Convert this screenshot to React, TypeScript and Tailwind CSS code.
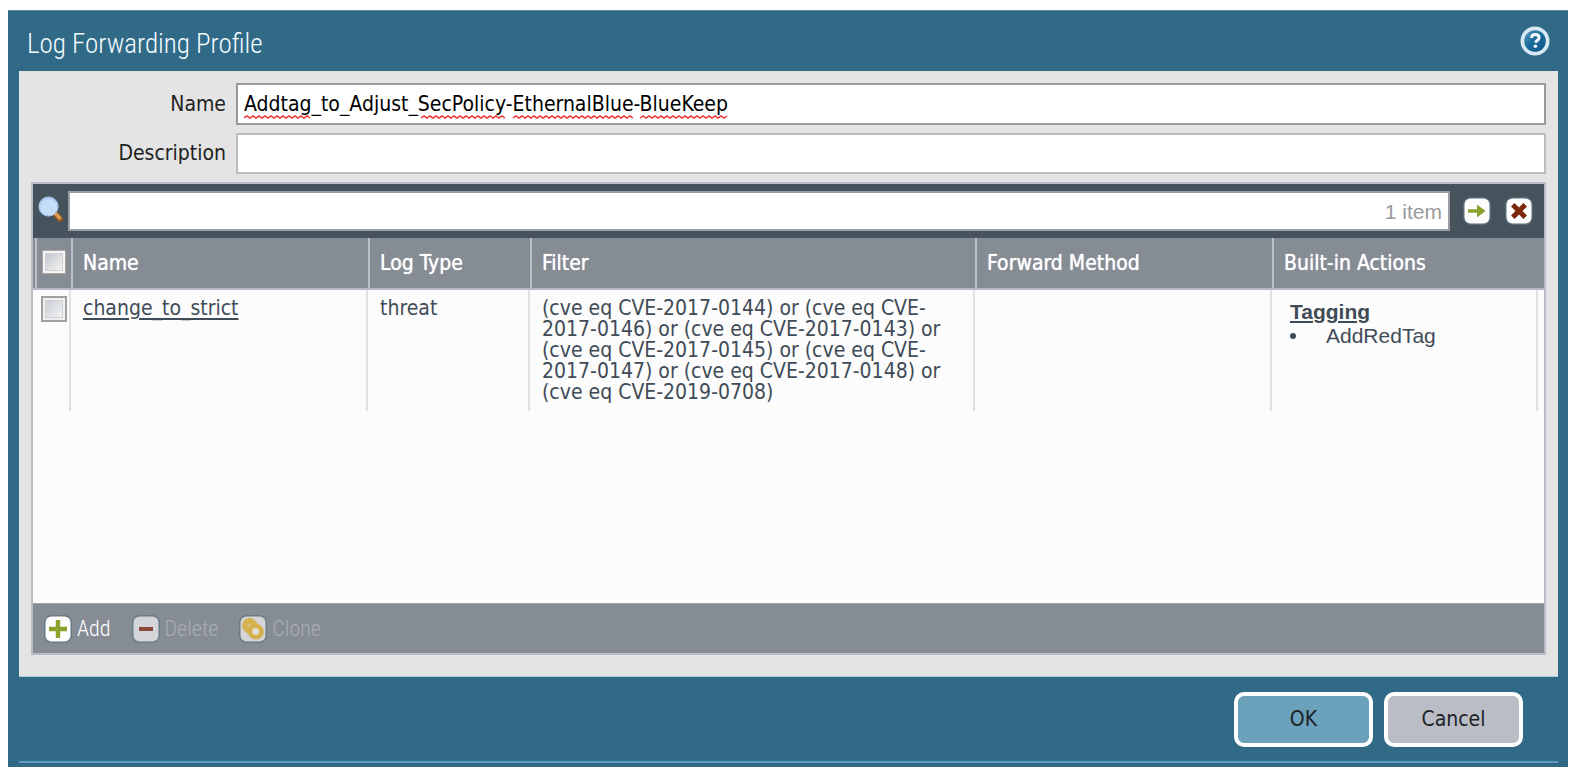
import { useState } from "react";
import type { ReactNode } from "react";

const misspelled = [
  { from: 0, to: 66 },
  { from: 177, to: 261 },
  { from: 269, to: 389 },
  { from: 396, to: 483 },
];

function wave(from: number, to: number) {
  let d = `M${from} 3`;
  let up = false;
  for (let x = from + 3; x <= to; x += 3) {
    d += ` L${x} ${up ? 3 : 1}`;
    up = !up;
  }
  return d;
}

function SpellMarks() {
  return (
    <svg
      aria-hidden="true"
      className="pointer-events-none absolute bottom-1.5 left-2"
      width="492"
      height="4"
      fill="none"
      stroke="#f03232"
      strokeWidth="1.5"
    >
      {misspelled.map((m) => (
        <path key={m.from} d={wave(m.from, m.to)} />
      ))}
    </svg>
  );
}

function HelpIcon() {
  return (
    <svg width="30" height="30" viewBox="0 0 30 30" aria-hidden="true">
      <defs>
        <linearGradient id="helpFill" x1="0" y1="0" x2="1" y2="1">
          <stop offset="0" stopColor="#5f9cc0" />
          <stop offset="0.45" stopColor="#1c6b9b" />
          <stop offset="1" stopColor="#0a5486" />
        </linearGradient>
      </defs>
      <circle cx="15" cy="15" r="14.5" fill="#d9e8f5" />
      <circle cx="15" cy="15" r="10.8" fill="url(#helpFill)" />
      <path
        d="M11.4 11.8c.2-2.2 1.8-3.4 3.9-3.4 2.2 0 3.8 1.2 3.8 3.1 0 2.6-3.2 2.7-3.5 5.2"
        fill="none"
        stroke="#f2f8fd"
        strokeWidth="3"
      />
      <circle cx="15.4" cy="20.2" r="1.8" fill="#f2f8fd" />
    </svg>
  );
}

function SearchIcon() {
  return (
    <svg width="26" height="27" viewBox="0 0 26 27" aria-hidden="true">
      <defs>
        <radialGradient id="lens" cx="0.5" cy="0.55" r="0.55">
          <stop offset="0" stopColor="#c3dcf5" />
          <stop offset="0.7" stopColor="#c6dff8" />
          <stop offset="1" stopColor="#9bbbe6" />
        </radialGradient>
      </defs>
      <path d="M18 17.5l5 5.5" stroke="#8a5520" strokeWidth="6" strokeLinecap="round" />
      <path d="M18 17l4.5 5" stroke="#d99a55" strokeWidth="3.6" strokeLinecap="round" />
      <circle cx="11.5" cy="10.5" r="9.6" fill="url(#lens)" stroke="#a9c6ec" strokeWidth="1" />
    </svg>
  );
}

function Tile({ faded, children }: { faded?: boolean; children: ReactNode }) {
  return (
    <svg width="30" height="30" viewBox="0 0 30 30" aria-hidden="true">
      <rect x="1" y="1" width="28" height="28" rx="8" fill="#5f7482" opacity="0.75" />
      <rect x="2.5" y="2.5" width="25" height="25" rx="6" fill={faded ? "#d3d5d8" : "#fdfefd"} />
      {children}
    </svg>
  );
}

function CheckBox({ label, outlined }: { label: string; outlined?: boolean }) {
  return (
    <input
      type="checkbox"
      aria-label={label}
      className={
        outlined
          ? "block size-[26px] shrink-0 appearance-none border-2 border-[#a0a0a0] bg-linear-to-br from-[#c0c8d0] to-[#fafafa] shadow-[inset_0_0_0_2px_#f0f0f0,inset_0_0_0_3px_#d0d0d0] checked:from-[#6ba1ba] checked:to-[#316a87]"
          : "block size-6 shrink-0 appearance-none border border-[#aaa5a2] bg-linear-to-br from-[#bcc1c6] to-[#fafafa] shadow-[inset_0_0_0_2px_#f4f4f4,inset_0_0_0_3px_#d0d0d0] checked:from-[#6ba1ba] checked:to-[#316a87]"
      }
    />
  );
}

function HeadCell({ children }: { children: ReactNode }) {
  return (
    <th
      scope="col"
      className="border-b-2 border-l-2 border-b-[#b4b8c1] border-l-[#bcc1c9] p-0 pl-2.5 text-left font-normal text-white [text-shadow:0_0_1px_#ffffff]"
    >
      {children}
    </th>
  );
}

function Field({ id, label, children }: { id: string; label: string; children: ReactNode }) {
  return (
    <div className="flex items-center">
      <label htmlFor={id} className="w-[205px] shrink-0 pr-2.5 text-right">
        {label}
      </label>
      <div className="relative flex-1">{children}</div>
    </div>
  );
}

export default function App() {
  const [name, setName] = useState("Addtag_to_Adjust_SecPolicy-EthernalBlue-BlueKeep");

  return (
    <main className="bg-white pt-2.5 pr-2.5 pb-3.5 pl-2 font-['DejaVu_Sans_Condensed','DejaVu_Sans',sans-serif] text-[21px] leading-[21px] text-[#222222]">
      <section aria-labelledby="dialog-title" className="border-t border-[#5d8aa3] bg-[#316a87] pr-2.5 pb-1 pl-[11px]">
        <header className="flex h-[60px] items-center justify-between pr-2 pl-2">
          <h1 id="dialog-title" className="pt-1.5 font-['Roboto_Condensed','Roboto',sans-serif] text-[27px] leading-8 font-light text-[#f4fcff]">
            Log Forwarding Profile
          </h1>
          <button type="button" aria-label="Help">
            <HelpIcon />
          </button>
        </header>

        <div className="border-b border-[#a9cbdc] bg-[#e4e4e4] px-3 pt-3 pb-[21px]">
          <div className="flex flex-col gap-2">
            <Field id="profile-name" label="Name">
              <input
                id="profile-name"
                type="text"
                spellCheck={false}
                value={name}
                onChange={(e) => setName(e.target.value)}
                className="block h-[42px] w-full border-2 border-[#9a9a9a] bg-white px-1.5 text-black outline-none"
              />
              <SpellMarks />
            </Field>
            <Field id="profile-description" label="Description">
              <input
                id="profile-description"
                type="text"
                className="block h-[41px] w-full border-2 border-[#bdbdbd] bg-white px-1.5 text-black outline-none"
              />
            </Field>
          </div>

          <div className="mt-2 border-2 border-[#b9bcc4] bg-[#fcfcfc]">
            <div className="flex h-[54px] items-center bg-[#46525c] pr-2.5 pl-1">
              <label htmlFor="search" className="mr-[5px] pb-1">
                <SearchIcon />
              </label>
              <div className="relative flex-1">
                <input
                  id="search"
                  type="text"
                  aria-label="Search"
                  className="block h-10 w-full border-2 border-[#9b9fa3] bg-white pr-20 pl-1.5 text-black outline-none"
                />
                <span className="pointer-events-none absolute top-2.5 right-2 font-['Liberation_Sans',sans-serif] text-[21px] text-[#9a9a9a]">
                  1 item
                </span>
              </div>
              <button type="button" aria-label="Apply filter" className="ml-3">
                <Tile>
                  <path d="M6 13.3h9V8.6l8.6 6.4-8.6 6.4v-4.7H6z" fill="#8ba32c" />
                </Tile>
              </button>
              <button type="button" aria-label="Clear filter" className="ml-3">
                <Tile>
                  <path d="M8.8 8.8l12.4 12.4M21.2 8.8L8.8 21.2" stroke="#7c2708" strokeWidth="5" />
                </Tile>
              </button>
            </div>

            <div className="min-h-[365px]">
              <table className="w-full table-fixed border-separate border-spacing-0">
                <colgroup>
                  <col className="w-[38px]" />
                  <col className="w-[297px]" />
                  <col className="w-[162px]" />
                  <col className="w-[445px]" />
                  <col className="w-[297px]" />
                  <col />
                  <col className="w-[6px]" />
                </colgroup>
                <thead>
                  <tr className="h-[52px] bg-[#858c93]">
                    <th scope="col" className="border-b-2 border-[#b4b8c1] p-0">
                      <div className="ml-0.5 flex h-[50px] items-center border-l-2 border-[#bcc1c9] pb-0.5 pl-[5px]">
                        <CheckBox label="Select all" />
                      </div>
                    </th>
                    <HeadCell>Name</HeadCell>
                    <HeadCell>Log Type</HeadCell>
                    <HeadCell>Filter</HeadCell>
                    <HeadCell>Forward Method</HeadCell>
                    <HeadCell>Built-in Actions</HeadCell>
                    <td className="border-b-2 border-[#b4b8c1] p-0" />
                  </tr>
                </thead>
                <tbody>
                  <tr className="h-[121px] align-top text-[#3f4b57] [&>td]:border-r-2 [&>td]:border-[#dfe1e5]">
                    <td className="pt-1.5 pl-2">
                      <CheckBox label="Select change_to_strict" outlined />
                    </td>
                    <td className="pt-2 pl-3">
                      <a href="#change_to_strict" className="underline decoration-2 underline-offset-[3px]">
                        change_to_strict
                      </a>
                    </td>
                    <td className="pt-2 pl-3">threat</td>
                    <td className="pt-2 pr-6 pl-3">
                      (cve eq CVE-2017-0144) or (cve eq CVE-2017-0146) or (cve eq CVE-2017-0143) or (cve eq CVE-2017-0145) or (cve
                      eq CVE-2017-0147) or (cve eq CVE-2017-0148) or (cve eq CVE-2019-0708)
                    </td>
                    <td />
                    <td className="pt-2.5 pl-[18px] font-['Liberation_Sans',sans-serif] leading-6">
                      <a href="#tagging" className="font-bold underline decoration-2 underline-offset-2">
                        Tagging
                      </a>
                      <ul>
                        <li className="flex items-center gap-[30px]">
                          <span aria-hidden="true" className="size-1.5 rounded-full bg-[#3f4b57]" />
                          AddRedTag
                        </li>
                      </ul>
                    </td>
                    <td className="border-none!" />
                  </tr>
                </tbody>
              </table>
            </div>

            <div className="flex h-[50px] items-center gap-5 border-t border-[#a2a6ac] bg-[#858c93] pl-2.5 font-['Roboto_Condensed','Roboto',sans-serif] text-[22px] font-light">
              <button type="button" className="flex items-center gap-1 text-white">
                <Tile>
                  <path d="M15 6v18M6 15h18" stroke="#8ba32c" strokeWidth="4.4" />
                </Tile>
                Add
              </button>
              <button type="button" disabled className="flex items-center gap-1 text-[#a9adb3]">
                <Tile faded>
                  <path d="M8 15h14" stroke="#8c4a3a" strokeWidth="4" />
                </Tile>
                Delete
              </button>
              <button type="button" disabled className="flex items-center gap-1 text-[#a9adb3]">
                <Tile faded>
                  <circle cx="11.5" cy="11.5" r="7.4" fill="#d6b04d" />
                  <path d="M6.5 16.5l7 7L24 14l-7-7z" fill="#d6b04d" />
                  <circle cx="18" cy="17.8" r="7.8" fill="#d6b04d" />
                  <circle cx="17.6" cy="17.4" r="3.4" fill="#e2e0d8" />
                  <circle cx="10.8" cy="11.2" r="1.6" fill="#dcc584" />
                </Tile>
                Clone
              </button>
            </div>
          </div>
        </div>

        <footer className="flex justify-end gap-[11px] border-b-2 border-[#5a9dbc] pt-[15px] pr-[35px] pb-3.5">
          <button type="button" className="h-[55px] w-[139px] rounded-[10px] border-4 border-white bg-[#6ba1ba] text-[#1c2226]">
            OK
          </button>
          <button type="button" className="h-[55px] w-[139px] rounded-[10px] border-4 border-white bg-[#babdc5] text-[#1c2226]">
            Cancel
          </button>
        </footer>
      </section>
    </main>
  );
}
